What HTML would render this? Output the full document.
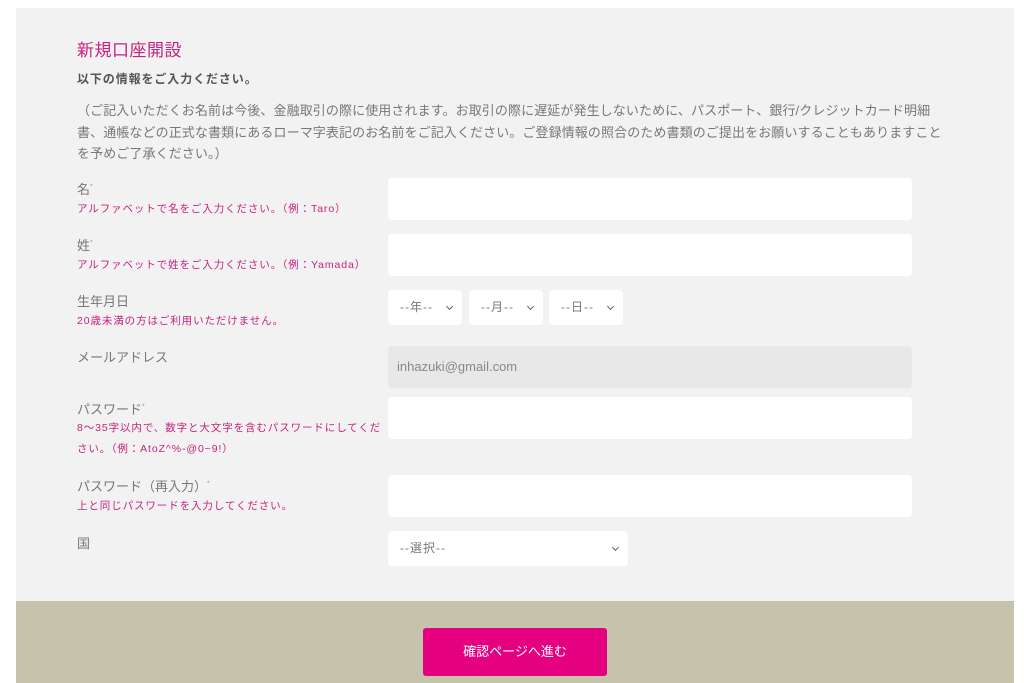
<!DOCTYPE html>
<html><head><meta charset="utf-8"><style>
*{margin:0;padding:0;box-sizing:border-box}
body{width:1024px;height:683px;background:#fff;position:relative;overflow:hidden;font-family:"Liberation Sans","Noto Sans CJK JP",sans-serif;color:#666}
.panel{position:absolute;left:16px;top:8px;width:998px;height:593px;background:#f2f2f2}
.foot{position:absolute;left:16px;top:601px;width:998px;height:82px;background:#c6c3ad}
.btn{position:absolute;left:423px;top:628px;width:184px;height:48px;background:#e4007f;border-radius:3px;color:#fff;font-size:13px;text-align:center;line-height:48px}
.a{position:absolute;white-space:nowrap}
h1{position:absolute;left:77px;top:36px;font-size:17px;font-weight:normal;color:#c8217f;letter-spacing:0.5px}
.sub{left:77px;top:70px;font-size:12px;font-weight:bold;color:#555;letter-spacing:0.9px}
.p{left:77px;top:100px;font-size:13px;line-height:21.5px;color:#777;letter-spacing:0.1px}
.lbl{font-size:13px;color:#777;left:77px}
.hint{font-size:10.5px;color:#c8217f;left:77px;line-height:21px;letter-spacing:0.9px}
.in{position:absolute;left:388px;width:524px;height:42px;background:#fff;border-radius:4px}
.sel{position:absolute;top:290px;height:35px;width:74px;background:#fff;border-radius:4px;font-size:12px;color:#777;line-height:35px;padding-left:12px;letter-spacing:1px}
.chev{position:absolute;right:10px;top:14px;width:5px;height:5px;border-right:1.6px solid #666;border-bottom:1.6px solid #666;transform:rotate(45deg)}
sup{font-size:7px;color:#999}
</style></head><body>
<div class="panel"></div>
<h1>新規口座開設</h1>
<div class="a sub">以下の情報をご入力ください。</div>
<div class="a p">（ご記入いただくお名前は今後、金融取引の際に使用されます。お取引の際に遅延が発生しないために、パスポート、銀行/クレジットカード明細<br>書、通帳などの正式な書類にあるローマ字表記のお名前をご記入ください。ご登録情報の照合のため書類のご提出をお願いすることもありますこと<br>を予めご了承ください。）</div>

<div class="a lbl" style="top:179px">名<sup>*</sup></div>
<div class="a hint" style="top:199px">アルファベットで名をご入力ください。（例：Taro）</div>
<div class="in" style="top:178px"></div>

<div class="a lbl" style="top:235px">姓<sup>*</sup></div>
<div class="a hint" style="top:255px">アルファベットで姓をご入力ください。（例：Yamada）</div>
<div class="in" style="top:234px"></div>

<div class="a lbl" style="top:291px">生年月日</div>
<div class="a hint" style="top:311px">20歳未満の方はご利用いただけません。</div>
<div class="sel" style="left:388px">--年--<span class="chev"></span></div>
<div class="sel" style="left:469px">--月--<span class="chev"></span></div>
<div class="sel" style="left:549px">--日--<span class="chev"></span></div>

<div class="a lbl" style="top:347px">メールアドレス</div>
<div class="in" style="top:346px;background:#e8e8e8;font-size:13px;color:#888;line-height:42px;padding-left:9px">inhazuki@gmail.com</div>

<div class="a lbl" style="top:399px">パスワード<sup>*</sup></div>
<div class="a hint" style="top:418px;white-space:normal;width:312px">8～35字以内で、数字と大文字を含むパスワードにしてください。（例：AtoZ^%-@0~9!）</div>
<div class="in" style="top:397px"></div>

<div class="a lbl" style="top:476px">パスワード（再入力）<sup>*</sup></div>
<div class="a hint" style="top:496px">上と同じパスワードを入力してください。</div>
<div class="in" style="top:475px"></div>

<div class="a lbl" style="top:533px">国</div>
<div class="sel" style="left:388px;top:531px;width:240px">--選択--<span class="chev"></span></div>

<div class="foot"></div>
<div class="btn">確認ページへ進む</div>
</body></html>
